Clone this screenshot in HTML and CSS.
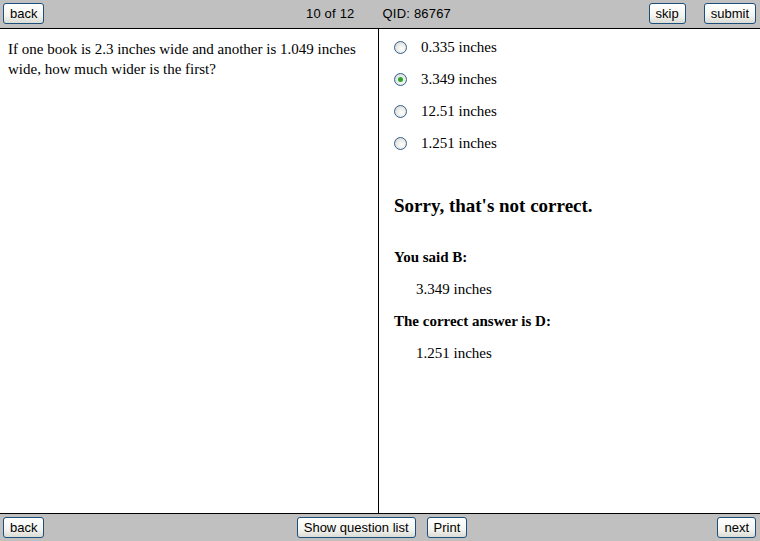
FILE: index.html
```html
<!DOCTYPE html>
<html>
<head>
<meta charset="utf-8">
<link rel="stylesheet" href="styles.css">
</head>
<body>
<div class="page">
  <header class="bar top">
    <div class="left"><button class="btn">back</button></div>
    <div class="center">
      <span class="count">10 of 12</span>
      <span class="qid">QID: 86767</span>
    </div>
    <div class="right">
      <button class="btn">skip</button>
      <button class="btn">submit</button>
    </div>
  </header>
  <main class="content">
    <section class="question">
      <p>If one book is 2.3 inches wide and another is 1.049 inches wide, how much wider is the first?</p>
    </section>
    <section class="answers">
      <ul class="choices">
        <li><span class="radio"></span><span class="label">0.335 inches</span></li>
        <li><span class="radio checked"></span><span class="label">3.349 inches</span></li>
        <li><span class="radio"></span><span class="label">12.51 inches</span></li>
        <li><span class="radio"></span><span class="label">1.251 inches</span></li>
      </ul>
      <h2 class="verdict">Sorry, that's not correct.</h2>
      <p class="said">You said B:</p>
      <p class="ans">3.349 inches</p>
      <p class="said">The correct answer is D:</p>
      <p class="ans">1.251 inches</p>
    </section>
  </main>
  <footer class="bar bottom">
    <div class="left"><button class="btn">back</button></div>
    <div class="center">
      <button class="btn">Show question list</button>
      <button class="btn">Print</button>
    </div>
    <div class="right">
      <button class="btn">next</button>
    </div>
  </footer>
</div>
</body>
</html>
```
FILE: styles.css
```css
html, body {
  margin: 0;
  padding: 0;
}
body {
  width: 760px;
  height: 541px;
  overflow: hidden;
  background: #ffffff;
  font-family: "Liberation Serif", "Times New Roman", serif;
  color: #000;
}
.page {
  display: flex;
  flex-direction: column;
  height: 541px;
}
.bar {
  display: grid;
  grid-template-columns: 1fr auto 1fr;
  align-items: center;
  background: #c0c0c0;
  font-family: "Liberation Sans", Arial, sans-serif;
  font-size: 13px;
  color: #000;
  box-sizing: border-box;
}
.top {
  border-bottom: 1px solid #000;
  height: 29px;
  padding: 0 4px 1px 3px;
}
.bottom {
  height: 28px;
  border-top: 1px solid #000;
  padding: 0 4px 0 3px;
}
.bar .left {
  display: flex;
  justify-content: flex-start;
}
.bar .right {
  display: flex;
  justify-content: flex-end;
  gap: 18px;
}
.top .center {
  display: flex;
  gap: 28px;
  padding-right: 2px;
  letter-spacing: 0.2px;
}
.bottom .center {
  display: flex;
  gap: 11px;
  padding-left: 5px;
}
.btn {
  font-family: "Liberation Sans", Arial, sans-serif;
  font-size: 13px;
  height: 21px;
  padding: 0 6px;
  border: 1px solid #1d4f7c;
  border-radius: 3px;
  background: linear-gradient(#ffffff, #f4f4f0 60%, #dcdcd6);
  color: #000;
  line-height: 19px;
  margin: 0;
}
.content {
  flex: 1;
  display: flex;
  min-height: 0;
}
.question {
  width: 379px;
  border-right: 1px solid #000;
  box-sizing: border-box;
  padding: 10px 10px 0 8px;
  font-size: 15px;
  line-height: 20px;
}
.question p {
  margin: 0;
}
.answers {
  flex: 1;
  padding: 2px 0 0 14px;
  font-size: 15px;
}
.choices {
  list-style: none;
  margin: 0;
  padding: 0;
}
.choices li {
  display: flex;
  align-items: center;
  height: 32px;
}
.radio {
  box-sizing: border-box;
  width: 13px;
  height: 13px;
  border-radius: 50%;
  border: 1px solid #2f5f8e;
  background: radial-gradient(circle at 60% 60%, #ffffff 0%, #eeeeea 40%, #cfd3d6 100%);
  margin: 0 14px 0 1px;
  position: relative;
}
.radio.checked::after {
  content: "";
  position: absolute;
  left: 3px;
  top: 3px;
  width: 5px;
  height: 5px;
  border-radius: 50%;
  background: #2aa52a;
}
.verdict {
  font-size: 19px;
  font-weight: bold;
  margin: 35px 0 0 1px;
  line-height: 24px;
}
.said {
  font-weight: bold;
  margin: 0 0 0 1px;
  line-height: 32px;
}
.verdict + .said {
  margin-top: 23px;
}
.ans {
  margin: 0 0 0 23px;
  line-height: 32px;
}
```
